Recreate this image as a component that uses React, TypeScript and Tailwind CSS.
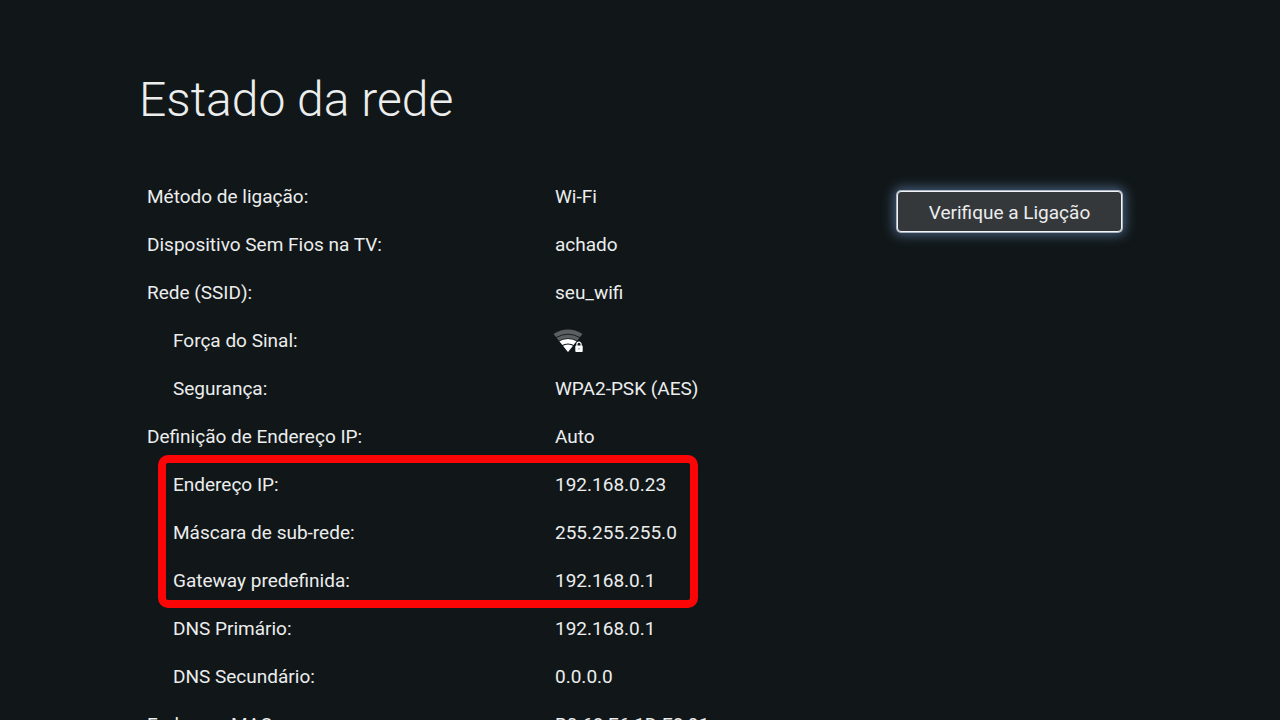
type Item = { label: string; value: string; sub?: boolean; signal?: boolean };

const connection: Item[] = [
  { label: 'Método de ligação:', value: 'Wi-Fi' },
  { label: 'Dispositivo Sem Fios na TV:', value: 'achado' },
  { label: 'Rede (SSID):', value: 'seu_wifi' },
  { label: 'Força do Sinal:', value: '', sub: true, signal: true },
  { label: 'Segurança:', value: 'WPA2-PSK (AES)', sub: true },
  { label: 'Definição de Endereço IP:', value: 'Auto' },
];

const address: Item[] = [
  { label: 'Endereço IP:', value: '192.168.0.23', sub: true },
  { label: 'Máscara de sub-rede:', value: '255.255.255.0', sub: true },
  { label: 'Gateway predefinida:', value: '192.168.0.1', sub: true },
];

const rest: Item[] = [
  { label: 'DNS Primário:', value: '192.168.0.1', sub: true },
  { label: 'DNS Secundário:', value: '0.0.0.0', sub: true },
  { label: 'Endereço MAC:', value: 'B0:68:E6:1D:E8:91' },
];

function SignalIcon() {
  return (
    <svg className="-ml-0.5 h-6 w-8" viewBox="0 0 32 24" role="img" aria-label="Sinal Wi-Fi protegido">
      <path d="M0.5 4.9Q15-3.9 29.5 4.9L15 23Z" fill="#5c5f61" />
      <path d="M3 8.6Q15 1.8 27 8.6" fill="none" stroke="#111719" strokeWidth="0.9" />
      <path d="M6.4 12.3Q15 7.7 23.6 12.3L15 23Z" fill="#ffffff" />
      <path d="M5.8 12Q15 7 24.2 12" fill="none" stroke="#111719" strokeWidth="0.7" />
      <path d="M8.8 16.8Q15 13.2 21.2 16.8" fill="none" stroke="#111719" strokeWidth="1.1" />
      <path d="M21.3 15.2L23.6 12.4H31V24H21.3Z" fill="#111719" />
      <rect x="22.3" y="16.6" width="7.4" height="6.4" rx="0.8" fill="#ffffff" />
      <path d="M23.9 17v-1.7a2.1 2.1 0 0 1 4.2 0V17" fill="none" stroke="#ffffff" strokeWidth="1.2" />
      <circle cx="26" cy="19.8" r="0.7" fill="#777b7d" />
    </svg>
  );
}

function Rows({ items }: { items: Item[] }) {
  return (
    <dl>
      {items.map((item) => (
        <div key={item.label} className="flex h-12 items-center">
          <dt className={item.sub ? 'w-[408px] shrink-0 pl-[26px]' : 'w-[408px] shrink-0'}>{item.label}</dt>
          <dd>{item.signal ? <SignalIcon /> : item.value}</dd>
        </div>
      ))}
    </dl>
  );
}

export default function App() {
  return (
    <main className="h-screen overflow-hidden bg-[#111719] px-[139px] pt-[71px] font-['Roboto',sans-serif] text-[#eceded]">
      <h1 className="text-5xl leading-[58px] font-light">Estado da rede</h1>
      <div className="mt-11 flex items-start justify-between pr-[19px] pl-2">
        <section className="text-[19px] leading-6">
          <Rows items={connection} />
          <div className="relative">
            <Rows items={address} />
            <div className="pointer-events-none absolute -top-1.5 -bottom-[3px] left-[11px] w-[540px] rounded-[10px] border-8 border-[#fb0507]" />
          </div>
          <Rows items={rest} />
        </section>
        <button
          type="button"
          className="mt-[18px] h-[41px] w-[225px] rounded-[4px] border border-[#f2f6fa] bg-[#35383b] pt-0.5 text-[19px] leading-6 shadow-[0_0_0_1px_#a9b4c0,0_0_12px_3px_#48617f]"
        >
          Verifique a Ligação
        </button>
      </div>
    </main>
  );
}
